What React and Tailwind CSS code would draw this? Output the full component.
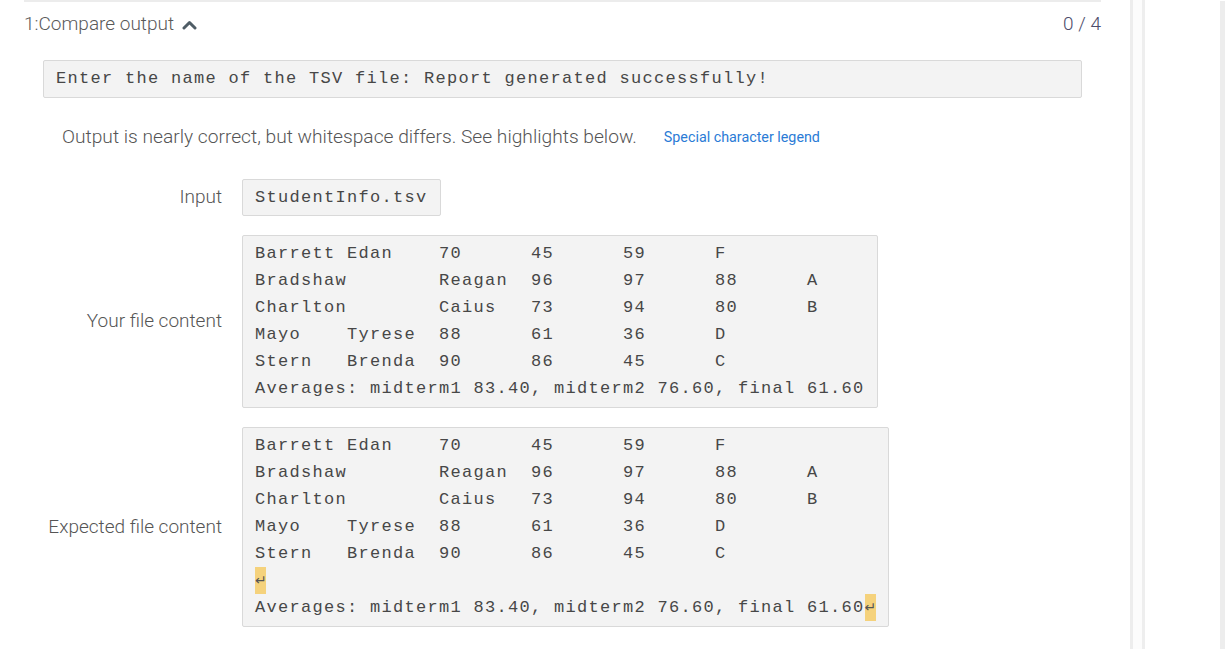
import React from 'react';

const yourRows = [
  'Barrett Edan\t70\t45\t59\tF',
  'Bradshaw\tReagan\t96\t97\t88\tA',
  'Charlton\tCaius\t73\t94\t80\tB',
  'Mayo\tTyrese\t88\t61\t36\tD',
  'Stern\tBrenda\t90\t86\t45\tC',
];

const averages = 'Averages: midterm1 83.40, midterm2 76.60, final 61.60';

const mono = "font-['Liberation_Mono',monospace] text-[17px] tracking-[1.3px] text-[#474747] [tab-size:92px] whitespace-pre";

const Newline = () => (
  <span className="inline-block bg-[#f5d27c] text-[#555] tracking-normal w-[11px] text-center font-['DejaVu_Sans',sans-serif] text-[14px] align-top">↵</span>
);

const Row = ({ label, children }) => (
  <div className="flex items-center">
    <div className="w-[198px] shrink-0 text-right text-[19px] font-light text-[#555]">{label}</div>
    <div className="ml-5">{children}</div>
  </div>
);

export default function App() {
  return (
    <div className="flex h-[649px] bg-white overflow-hidden font-['Roboto',sans-serif]">
      {/* Main column */}
      <div className="w-[1130px] shrink-0 pl-6 pr-[29px]">
        <div className="border-t-2 border-[#ececec]">
          {/* Header */}
          <div className="flex items-center justify-between h-[45px]">
            <div className="flex items-center gap-2 text-[19px] font-light text-[#5a5a5a]">
              <span>1:Compare output</span>
              <svg width="15" height="10" viewBox="0 0 15 10" className="mt-[1px]">
                <polyline points="2,8 7.5,2.5 13,8" fill="none" stroke="#4f5d66" strokeWidth="3" strokeLinecap="round" strokeLinejoin="round" />
              </svg>
            </div>
            <span className="text-[19px] font-light text-[#4c4c6a]">0 / 4</span>
          </div>

          {/* Program output */}
          <div className="mt-[13px] mx-[19px] h-[38px] flex items-center px-[12px] bg-[#f3f3f3] border border-[#d9d9d9] rounded-[2px]">
            <span className={mono}>Enter the name of the TSV file: Report generated successfully!</span>
          </div>

          {/* Message */}
          <div className="mt-[25px] ml-[38px] flex items-center gap-[27px]">
            <span className="text-[19.2px] font-light text-[#555]">Output is nearly correct, but whitespace differs. See highlights below.</span>
            <span className="text-[14.3px] text-[#2a7bd6]">Special character legend</span>
          </div>

          <div className="mt-[27px] flex flex-col gap-[19px]">
            <Row label="Input">
              <div className={`inline-block bg-[#f3f3f3] border border-[#d9d9d9] rounded-[2px] px-[12px] h-[37px] leading-[35px] ${mono}`}>StudentInfo.tsv</div>
            </Row>

            <Row label="Your file content">
              <div className={`inline-block bg-[#f3f3f3] border border-[#d9d9d9] rounded-[2px] px-[12px] pt-[4px] pb-[5px] leading-[27px] ${mono}`}>
                {yourRows.map((r) => (
                  <div key={r}>{r}</div>
                ))}
                <div>{averages}</div>
              </div>
            </Row>

            <Row label="Expected file content">
              <div className={`inline-block bg-[#f3f3f3] border border-[#d9d9d9] rounded-[2px] px-[12px] pt-[4px] pb-[5px] leading-[27px] ${mono}`}>
                {yourRows.map((r) => (
                  <div key={r}>{r}</div>
                ))}
                <div><Newline /></div>
                <div>{averages}<Newline /></div>
              </div>
            </Row>
          </div>
        </div>
      </div>

      {/* Divider strip */}
      <div className="w-[15px] shrink-0 bg-[#fcfcfc] border-l-[3px] border-[#ededed] flex justify-end">
        <div className="w-[3px] bg-[#eeeeee]" />
      </div>

      {/* Side panel */}
      <div className="flex-1 bg-white border-r-[5px] border-[#ededed] mt-[1px]" />
    </div>
  );
}
